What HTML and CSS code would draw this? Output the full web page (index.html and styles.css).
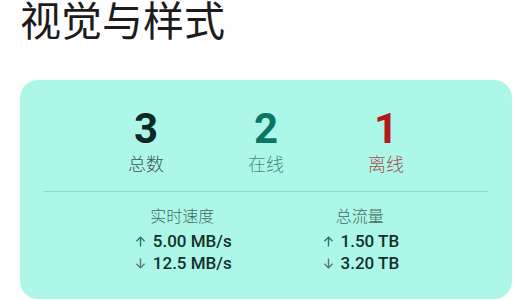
FILE: index.html
```html
<!DOCTYPE html>
<html lang="zh-CN">
<head>
    <meta charset="UTF-8">
    <meta name="viewport" content="width=device-width, initial-scale=1.0">
    <title>视觉与样式</title>
    <link rel="stylesheet" href="styles.css">
</head>
<body>
    <h1 class="page-title">视觉与样式</h1>
    <section class="stats-card">
        <div class="count-row">
            <div class="count">
                <span class="count-value total">3</span>
                <span class="count-label total">总数</span>
            </div>
            <div class="count">
                <span class="count-value online">2</span>
                <span class="count-label online">在线</span>
            </div>
            <div class="count">
                <span class="count-value offline">1</span>
                <span class="count-label offline">离线</span>
            </div>
        </div>
        <div class="divider"></div>
        <div class="traffic-row">
            <div class="traffic">
                <span class="traffic-title">实时速度</span>
                <span class="traffic-line">
                    <svg class="arrow up" viewBox="0 0 24 24"><path d="M12 20V5M5.5 11.5L12 5l6.5 6.5"/></svg>
                    5.00 MB/s
                </span>
                <span class="traffic-line">
                    <svg class="arrow down" viewBox="0 0 24 24"><path d="M12 4v15M5.5 12.5L12 19l6.5-6.5"/></svg>
                    12.5 MB/s
                </span>
            </div>
            <div class="traffic">
                <span class="traffic-title">总流量</span>
                <span class="traffic-line">
                    <svg class="arrow up" viewBox="0 0 24 24"><path d="M12 20V5M5.5 11.5L12 5l6.5 6.5"/></svg>
                    1.50 TB
                </span>
                <span class="traffic-line">
                    <svg class="arrow down" viewBox="0 0 24 24"><path d="M12 4v15M5.5 12.5L12 19l6.5-6.5"/></svg>
                    3.20 TB
                </span>
            </div>
        </div>
    </section>
</body>
</html>
```
FILE: styles.css
```css
body {
    margin: 0;
    padding: 0 2px 0 20px;
    background-color: #fdfefd;
    font-family: Roboto, "Noto Sans CJK SC", sans-serif;
    color: #1b1f1e;
    overflow: hidden;
}
.page-title {
    margin: 0;
    padding-top: 0;
    font-size: 41px;
    font-weight: 400;
    line-height: 44px;
    color: #1c1c1c;
}
.stats-card {
    margin-top: 36px;
    background-color: #adf7e8;
    border-radius: 18px;
    padding: 28px 24px 24px;
    height: 219px;
    box-sizing: border-box;
}
.count-row {
    display: flex;
    justify-content: space-evenly;
    padding-bottom: 14px;
}
.count {
    display: flex;
    flex-direction: column;
    align-items: center;
}
.count-value {
    font-size: 42px;
    font-weight: 700;
    line-height: 42px;
}
.count-label {
    margin-top: 3px;
    font-size: 18px;
    font-weight: 300;
    line-height: 24px;
}
.count-value.total { color: #0c2923; }
.count-label.total { color: #3a5751; }
.count-value.online { color: #0b7564; }
.count-label.online { color: #44907f; }
.count-value.offline { color: #b3191c; }
.count-label.offline { color: #a5504f; }
.divider {
    height: 1px;
    background-color: #8fd6c6;
}
.traffic-row {
    display: flex;
    justify-content: space-evenly;
    padding-top: 14px;
}
.traffic {
    display: flex;
    flex-direction: column;
    align-items: center;
}
.traffic-title {
    font-size: 16px;
    font-weight: 300;
    line-height: 22px;
    color: #436a61;
    margin-bottom: 2px;
}
.traffic-line {
    display: flex;
    align-items: center;
    gap: 5px;
    font-size: 17px;
    font-weight: 500;
    line-height: 22px;
    color: #13302a;
}
.arrow {
    width: 15px;
    height: 15px;
    fill: none;
    stroke-width: 2.2;
}
.arrow.up { stroke: #1b7a66; }
.arrow.down { stroke: #5b7770; }
```
